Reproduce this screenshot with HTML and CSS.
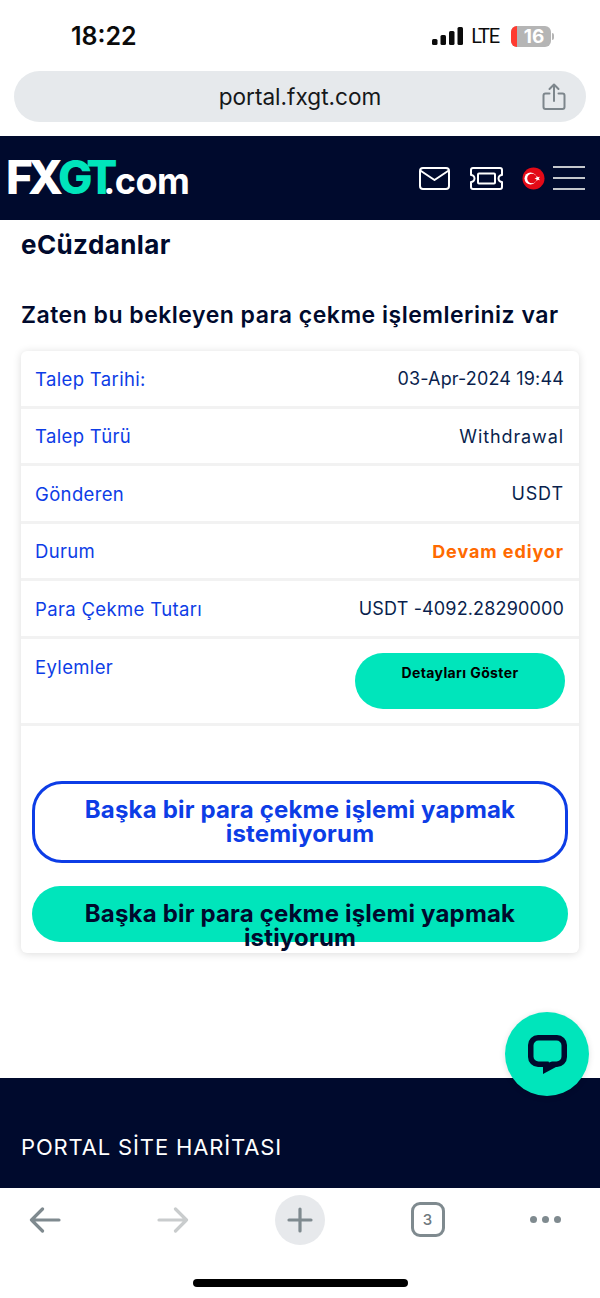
FILE: index.html
```html
<!DOCTYPE html>
<html lang="tr">
<head>
    <meta charset="UTF-8">
    <meta name="viewport" content="width=device-width, initial-scale=1.0">
    <title>FXGT Portal</title>
    <link rel="stylesheet" href="styles.css">
</head>
<body>
    <div class="phone">
        <div class="statusbar">
            <span class="clock">18:22</span>
            <div class="status-right">
                <svg class="signal" width="31" height="18" viewBox="0 0 31 18">
                    <rect x="0" y="12" width="5.500" height="6" rx="1.500"/>
                    <rect x="8.500" y="8" width="5.500" height="10" rx="1.500"/>
                    <rect x="17" y="4" width="5.500" height="14" rx="1.500"/>
                    <rect x="25.500" y="0" width="5.500" height="18" rx="1.500"/>
                </svg>
                <span class="lte">LTE</span>
                <div class="battery">
                    <div class="battery-body"><span class="battery-low"></span><span class="battery-num">16</span></div>
                    <span class="battery-tip"></span>
                </div>
            </div>
        </div>

        <div class="urlwrap">
            <div class="urlbar">
                <span class="url">portal.fxgt.com</span>
                <svg class="share" width="24" height="28" viewBox="0 0 24 28" fill="none" stroke="#7d868c" stroke-width="2" stroke-linecap="round" stroke-linejoin="round">
                    <path d="M7.500 10.500H3.500a2 2 0 0 0-2 2v11.500a2 2 0 0 0 2 2h17a2 2 0 0 0 2-2V12.500a2 2 0 0 0-2-2h-4"/>
                    <path d="M12 18V2M7.500 6 12 1.500 16.500 6"/>
                </svg>
            </div>
        </div>

        <div class="page">
            <header class="topnav">
                <div class="logo"><span class="logo-fx">FX</span><span class="logo-gt">GT</span><span class="logo-com">.com</span></div>
                <div class="nav-icons">
                    <svg class="nav-mail" width="31" height="23" viewBox="0 0 31 23" fill="none" stroke="#fff" stroke-width="2" stroke-linejoin="round" stroke-linecap="round">
                        <rect x="1" y="1" width="29" height="21" rx="3"/>
                        <path d="M2 4l13.500 9L29 4"/>
                    </svg>
                    <svg class="nav-ticket" width="35" height="23" viewBox="0 0 35 23" fill="none" stroke="#fff" stroke-width="2" stroke-linejoin="round">
                        <path d="M4 1h27a2 2 0 0 1 2 2v5a3.500 3.500 0 0 0 0 7v5a2 2 0 0 1-2 2H4a2 2 0 0 1-2-2v-5a3.500 3.500 0 0 0 0-7V3a2 2 0 0 1 2-2z"/>
                        <rect x="9" y="6.500" width="17" height="10" rx="1"/>
                    </svg>
                    <svg class="nav-flag" width="23" height="23" viewBox="0 0 23 23">
                        <circle cx="11.500" cy="11.500" r="11" fill="#e30a17"/>
                        <circle cx="8.500" cy="11.500" r="6" fill="#fff"/>
                        <circle cx="10" cy="11.500" r="4.800" fill="#e30a17"/>
                        <polygon points="12.500,11.500 14.530,10.790 14.570,8.650 15.870,10.360 17.930,9.740 16.700,11.500 17.930,13.260 15.870,12.640 14.570,14.350 14.530,12.210" fill="#fff"/>
                    </svg>
                    <div class="burger"><span></span><span></span><span></span></div>
                </div>
            </header>

            <main class="content">
                <h2 class="page-title">eCüzdanlar</h2>
                <h3 class="sub-title">Zaten bu bekleyen para çekme işlemleriniz var</h3>

                <div class="card">
                    <div class="row"><span class="label">Talep Tarihi:</span><span class="value">03-Apr-2024 19:44</span></div>
                    <div class="row"><span class="label">Talep Türü</span><span class="value value-word">Withdrawal</span></div>
                    <div class="row"><span class="label">Gönderen</span><span class="value value-word">USDT</span></div>
                    <div class="row"><span class="label">Durum</span><span class="value value-word pending">Devam ediyor</span></div>
                    <div class="row"><span class="label">Para Çekme Tutarı</span><span class="value">USDT -4092.28290000</span></div>
                    <div class="row row-actions"><span class="label">Eylemler</span><button class="btn-details">Detayları Göster</button></div>

                    <div class="card-buttons">
                        <a class="btn-big btn-outline">Başka bir para çekme işlemi yapmak istemiyorum</a>
                        <a class="btn-big btn-fill">Başka bir para çekme işlemi yapmak istiyorum</a>
                    </div>
                </div>
            </main>

            <footer class="sitefooter">PORTAL SİTE HARİTASI</footer>

            <div class="chat">
                <svg width="39" height="39" viewBox="0 0 39 39">
                    <path fill="#000a2d" fill-rule="evenodd" d="M10 0H29a10 10 0 0 1 10 10V22a10 10 0 0 1-10 10H28L15 39V32H10A10 10 0 0 1 0 22V10A10 10 0 0 1 10 0zM10.500 5.500A5 5 0 0 0 5.500 10.500V21.500A5 5 0 0 0 10.500 26.500H20.500L21 27.500 24 26.500H28.500A5 5 0 0 0 33.500 21.500V10.500A5 5 0 0 0 28.500 5.500z"/>
                </svg>
            </div>
        </div>

        <div class="toolbar">
            <div class="tool-cell">
                <svg width="32" height="26" viewBox="0 0 32 26" fill="none" stroke="#7f8a8f" stroke-width="3.200" stroke-linecap="round" stroke-linejoin="round">
                    <path d="M30 13H2.500M13.500 2 2.500 13l11 11"/>
                </svg>
            </div>
            <div class="tool-cell">
                <svg width="32" height="26" viewBox="0 0 32 26" fill="none" stroke="#c9cccd" stroke-width="3.200" stroke-linecap="round" stroke-linejoin="round">
                    <path d="M2 13h27.500M18.500 2l11 11-11 11"/>
                </svg>
            </div>
            <div class="tool-cell">
                <div class="tool-plus">
                    <svg width="26" height="26" viewBox="0 0 26 26" fill="none" stroke="#7f8a8f" stroke-width="3.200" stroke-linecap="round">
                        <path d="M13 2v22M2 13h22"/>
                    </svg>
                </div>
            </div>
            <div class="tool-cell">
                <div class="tabs-count">3</div>
            </div>
            <div class="tool-cell dots"><span></span><span></span><span></span></div>
        </div>
        <div class="home-area"><span class="home-bar"></span></div>
    </div>
</body>
</html>
```

FILE: styles.css
```css
* {
    box-sizing: border-box;
}
html, body {
    margin: 0;
    padding: 0;
    background: #fff;
}
body {
    font-family: "Inter", "Liberation Sans", sans-serif;
}
.phone {
    width: 600px;
    height: 1298px;
    display: flex;
    flex-direction: column;
    overflow: hidden;
}

/* iOS status bar */
.statusbar {
    height: 71px;
    padding: 0 46px 0 71px;
    display: flex;
    justify-content: space-between;
    align-items: center;
}
.clock {
    font-size: 25px;
    font-weight: 600;
    color: #0b0b0b;
    margin-top: 1px;
}
.status-right {
    display: flex;
    align-items: center;
    margin-top: 1px;
}
.signal {
    fill: #0b0b0b;
    margin-right: 8px;
}
.lte {
    font-family: "Roboto", sans-serif;
    font-size: 20px;
    letter-spacing: -1.200px;
    color: #0b0b0b;
    margin-right: 12px;
}
.battery {
    display: flex;
    align-items: center;
}
.battery-body {
    width: 40px;
    height: 21px;
    border-radius: 6px;
    background: #b5b5b5;
    display: flex;
    overflow: hidden;
}
.battery-low {
    width: 6px;
    background: #ff3b30;
}
.battery-num {
    flex: 1;
    text-align: center;
    color: #fff;
    font-size: 19px;
    font-weight: 700;
    line-height: 21px;
}
.battery-tip {
    width: 2px;
    height: 7px;
    margin-left: 1px;
    background: #b5b5b5;
    border-radius: 0 2px 2px 0;
}

/* address bar */
.urlwrap {
    height: 65px;
    padding: 0 14px;
}
.urlbar {
    height: 51px;
    border-radius: 26px;
    background: #e6e9ec;
    position: relative;
    display: flex;
    align-items: center;
    justify-content: center;
}
.url {
    font-size: 22.600px;
    color: #16181a;
}
.share {
    position: absolute;
    right: 20px;
    top: 12px;
}

/* site */
.page {
    flex: 1;
    min-height: 0;
    position: relative;
    display: flex;
    flex-direction: column;
}
.topnav {
    height: 84px;
    background: #000a2d;
    padding: 0 15px 0 6px;
    display: flex;
    align-items: center;
    justify-content: space-between;
}
.logo {
    font-weight: 800;
    display: flex;
    align-items: baseline;
    color: #fff;
    margin-top: -3px;
}
.logo-fx, .logo-gt {
    font-size: 46px;
    letter-spacing: -5px;
}
.logo-gt {
    color: #00e5bb;
}
.logo-com {
    font-size: 36px;
    font-weight: 700;
    letter-spacing: -0.500px;
    margin-left: -9px;
}
.nav-icons {
    display: flex;
    align-items: center;
}
.nav-ticket {
    margin-left: 19px;
}
.nav-flag {
    margin-left: 18px;
}
.burger {
    margin-left: 8px;
    width: 32px;
    height: 24px;
    display: flex;
    flex-direction: column;
    justify-content: space-between;
}
.burger span {
    display: block;
    height: 2px;
    background: #c4c7cc;
}

.content {
    flex: 1;
    padding: 0 21px;
}
.page-title {
    margin: 10px 0 0;
    font-size: 26px;
    line-height: 30px;
    font-weight: 700;
    letter-spacing: 0.400px;
    color: #000a2d;
}
.sub-title {
    margin: 40px 0 0;
    font-size: 23px;
    line-height: 30px;
    font-weight: 600;
    letter-spacing: 0.500px;
    color: #000a2d;
}
.card {
    margin-top: 21px;
    height: 602px;
    background: #fff;
    border-radius: 6px;
    box-shadow: 0 1px 8px rgba(0, 0, 0, 0.14);
}
.row {
    height: 57.500px;
    padding: 1px 15px 0 14px;
    display: flex;
    justify-content: space-between;
    align-items: center;
    border-bottom: 3px solid #f2f2f2;
    font-size: 18px;
}
.label {
    color: #0d3de6;
    font-size: 18.500px;
    letter-spacing: 0.350px;
}
.value {
    color: #0a1f4d;
    letter-spacing: 0.150px;
}
.value-word {
    letter-spacing: 0.900px;
}
.pending {
    color: #ff6a00;
    font-weight: 700;
}
.row-actions {
    height: 87px;
    align-items: flex-start;
    padding: 14px 14px 0 14px;
}
.row-actions .label {
    margin-top: 3px;
}
.btn-details {
    width: 210px;
    height: 56px;
    margin: 0;
    border: none;
    border-radius: 28px;
    background: #00e5bb;
    color: #000;
    font-family: inherit;
    font-size: 14px;
    font-weight: 700;
    letter-spacing: 0.400px;
    padding: 0 0 16px;
}
.card-buttons {
    padding: 55px 11px 0;
    display: flex;
    flex-direction: column;
    gap: 23px;
}
.btn-big {
    display: block;
    border-radius: 28px;
    font-size: 24px;
    line-height: 24px;
    font-weight: 700;
    letter-spacing: 0.180px;
    text-align: center;
    padding: 0 40px;
}
.btn-outline {
    height: 82px;
    background: #fff;
    border: 3px solid #0d3de6;
    color: #0d3de6;
    border-radius: 30px;
    padding-top: 14px;
}
/* second line runs out of the pill, same as the live site */
.btn-fill {
    height: 56px;
    background: #00e5bb;
    color: #000a2d;
    padding-top: 16px;
}
.sitefooter {
    height: 110px;
    flex: none;
    background: #000a2d;
    color: #fff;
    font-size: 22px;
    letter-spacing: 0.850px;
    padding: 57px 21px 0;
    line-height: 24px;
}
.chat {
    position: absolute;
    left: 505px;
    top: 876px;
    width: 84px;
    height: 84px;
    border-radius: 50%;
    background: #00e5bb;
    display: flex;
    align-items: center;
    justify-content: center;
    box-shadow: 0 1px 6px rgba(0, 0, 0, 0.12);
}

/* browser toolbar */
.toolbar {
    height: 63px;
    flex: none;
    padding: 0 20px;
    display: flex;
    align-items: center;
    justify-content: space-between;
    background: #fff;
}
.tool-cell {
    width: 50px;
    display: flex;
    align-items: center;
    justify-content: center;
}
.tool-plus {
    width: 50px;
    height: 50px;
    border-radius: 50%;
    background: #e7e9ec;
    display: flex;
    align-items: center;
    justify-content: center;
}
.tabs-count {
    width: 34px;
    height: 35px;
    border: 3px solid #7f8a8f;
    border-radius: 9px;
    color: #6f797e;
    font-size: 15px;
    font-weight: 500;
    display: flex;
    align-items: center;
    justify-content: center;
}
.dots {
    justify-content: flex-start;
    gap: 5px;
}
.dots span {
    width: 7px;
    height: 7px;
    border-radius: 50%;
    background: #7f8a8f;
}
.home-area {
    height: 47px;
    flex: none;
    display: flex;
    justify-content: center;
    padding-top: 28px;
}
.home-bar {
    width: 215px;
    height: 8px;
    border-radius: 4px;
    background: #000;
}
```
